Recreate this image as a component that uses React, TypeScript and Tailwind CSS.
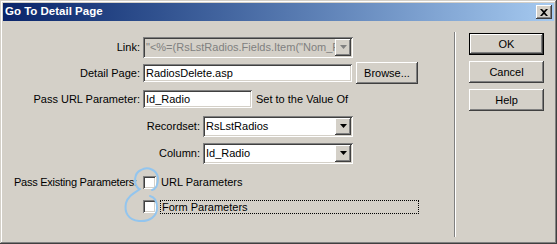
import React from 'react';

const font = { fontFamily: '"Liberation Sans", Arial, sans-serif' };

const sunken =
  'shadow-[inset_1px_1px_#808080,inset_-1px_-1px_#ffffff,inset_2px_2px_#404040,inset_-2px_-2px_#d4d0c8]';
const raised =
  'shadow-[inset_-1px_-1px_#404040,inset_1px_1px_#ffffff,inset_-2px_-2px_#808080,inset_2px_2px_#d4d0c8]';

const Arrow: React.FC<{ disabled?: boolean }> = ({ disabled }) => (
  <div className={`w-[16px] h-full flex items-center justify-center bg-[#d4d0c8] ${raised}`}>
    <svg width="7" height="4" viewBox="0 0 7 4">
      <polygon points="0,0 7,0 3.5,4" fill={disabled ? '#808080' : '#000'} />
    </svg>
  </div>
);

const Select: React.FC<{ value: string; width: string; disabled?: boolean }> = ({ value, width, disabled }) => (
  <div className={`${width} h-[21px] p-[2px] flex ${sunken} ${disabled ? 'bg-[#d4d0c8]' : 'bg-white'}`}>
    <div
      className={`flex-1 overflow-hidden whitespace-nowrap pl-[1px] leading-[17px] ${disabled ? 'text-[#808080]' : 'text-black'}`}
    >
      {value}
    </div>
    <Arrow disabled={disabled} />
  </div>
);

const Button: React.FC<{ label: string; className?: string; isDefault?: boolean }> = ({ label, className, isDefault }) => (
  <div className={`${isDefault ? 'border border-black' : ''} ${className ?? ''}`}>
    <div className={`w-full h-full flex items-center justify-center bg-[#d4d0c8] ${raised}`}>{label}</div>
  </div>
);

const Checkbox: React.FC = () => <div className={`w-[13px] h-[13px] bg-white ${sunken}`} />;

export default function App() {
  return (
    <div
      style={font}
      className="relative w-[557px] h-[244px] bg-[#d4d0c8] p-[3px] text-[11px] text-black shadow-[inset_-1px_-1px_#404040,inset_1px_1px_#d4d0c8,inset_-2px_-2px_#808080,inset_2px_2px_#ffffff] overflow-hidden"
    >
      {/* title bar */}
      <div className="h-[18px] flex items-center justify-between pl-[2px] pr-[2px] bg-gradient-to-r from-[#0a246a] to-[#a6caf0]">
        <span className="font-bold text-white text-[11.5px]">Go To Detail Page</span>
        <div className={`w-[16px] h-[14px] flex items-center justify-center bg-[#d4d0c8] ${raised}`}>
          <svg width="8" height="7" viewBox="0 0 8 7">
            <path d="M0 0h2l2 2 2-2h2L5 3.5 8 7H6L4 5 2 7H0l3-3.5z" fill="#000" />
          </svg>
        </div>
      </div>

      <div className="flex h-[220px]">
        {/* form */}
        <div className="w-[451px] flex flex-col">
          <div className="mt-[15px] h-[22px] flex items-center">
            <span className="w-[140px] pr-[3px] text-right">Link:</span>
            <Select width="w-[210px]" value={'"<%=(RsLstRadios.Fields.Item("Nom_Radio").Value)%>"'} disabled />
          </div>

          <div className="mt-[4px] h-[22px] flex items-center">
            <span className="w-[140px] pr-[3px] text-right">Detail Page:</span>
            <div className={`w-[209px] h-[18px] bg-white pl-[3px] leading-[18px] ${sunken}`}>RadiosDelete.asp</div>
            <Button label="Browse..." className="ml-[4px] w-[62px] h-[22px]" />
          </div>

          <div className="mt-[5px] h-[20px] flex items-center">
            <span className="w-[140px] pr-[3px] text-right">Pass URL Parameter:</span>
            <div className={`w-[109px] h-[18px] bg-white pl-[3px] leading-[18px] ${sunken}`}>Id_Radio</div>
            <span className="ml-[4px]">Set to the Value Of</span>
          </div>

          <div className="mt-[6px] h-[22px] flex items-center">
            <span className="w-[200px] pr-[3px] text-right">Recordset:</span>
            <Select width="w-[150px]" value="RsLstRadios" />
          </div>

          <div className="mt-[5px] h-[22px] flex items-center">
            <span className="w-[200px] pr-[3px] text-right">Column:</span>
            <Select width="w-[150px]" value="Id_Radio" />
          </div>

          <div className="mt-[11px] h-[15px] flex items-center">
            <span className="w-[140px] pl-[11px] tracking-[-0.25px] whitespace-nowrap">Pass Existing Parameters:</span>
            <Checkbox />
            <span className="ml-[5px]">URL Parameters</span>
          </div>

          <div className="mt-[9px] h-[15px] flex items-center">
            <span className="w-[140px]" />
            <Checkbox />
            <span className="ml-[4px] w-[259px] h-[14px] pl-[1px] leading-[12px] border border-dotted border-black">
              Form Parameters
            </span>
          </div>
        </div>

        {/* separator */}
        <div className="mt-[11px] h-[205px] w-[2px] border-l border-l-[#808080] border-r border-r-white" />

        {/* buttons */}
        <div className="pl-[13px] pt-[12px] flex flex-col gap-[6px]">
          <Button label="OK" isDefault className="w-[75px] h-[22px]" />
          <Button label="Cancel" className="w-[75px] h-[22px]" />
          <Button label="Help" className="w-[75px] h-[22px]" />
        </div>
      </div>

      {/* hand-drawn annotation */}
      <svg className="absolute left-0 top-0 pointer-events-none" width="557" height="244">
        <path
          d="M139 189 C133 184, 134 173, 141 170 C148 166, 157 170, 158 178 C158 184, 156 189, 152 190 M140 189 C134 193, 128 196, 126 203 C124 212, 128 220, 139 221 C150 222, 157 216, 157 208 C157 201, 155 197, 150 196"
          fill="none"
          stroke="#93c5ee"
          strokeWidth="2"
          strokeLinecap="round"
        />
      </svg>
    </div>
  );
}
